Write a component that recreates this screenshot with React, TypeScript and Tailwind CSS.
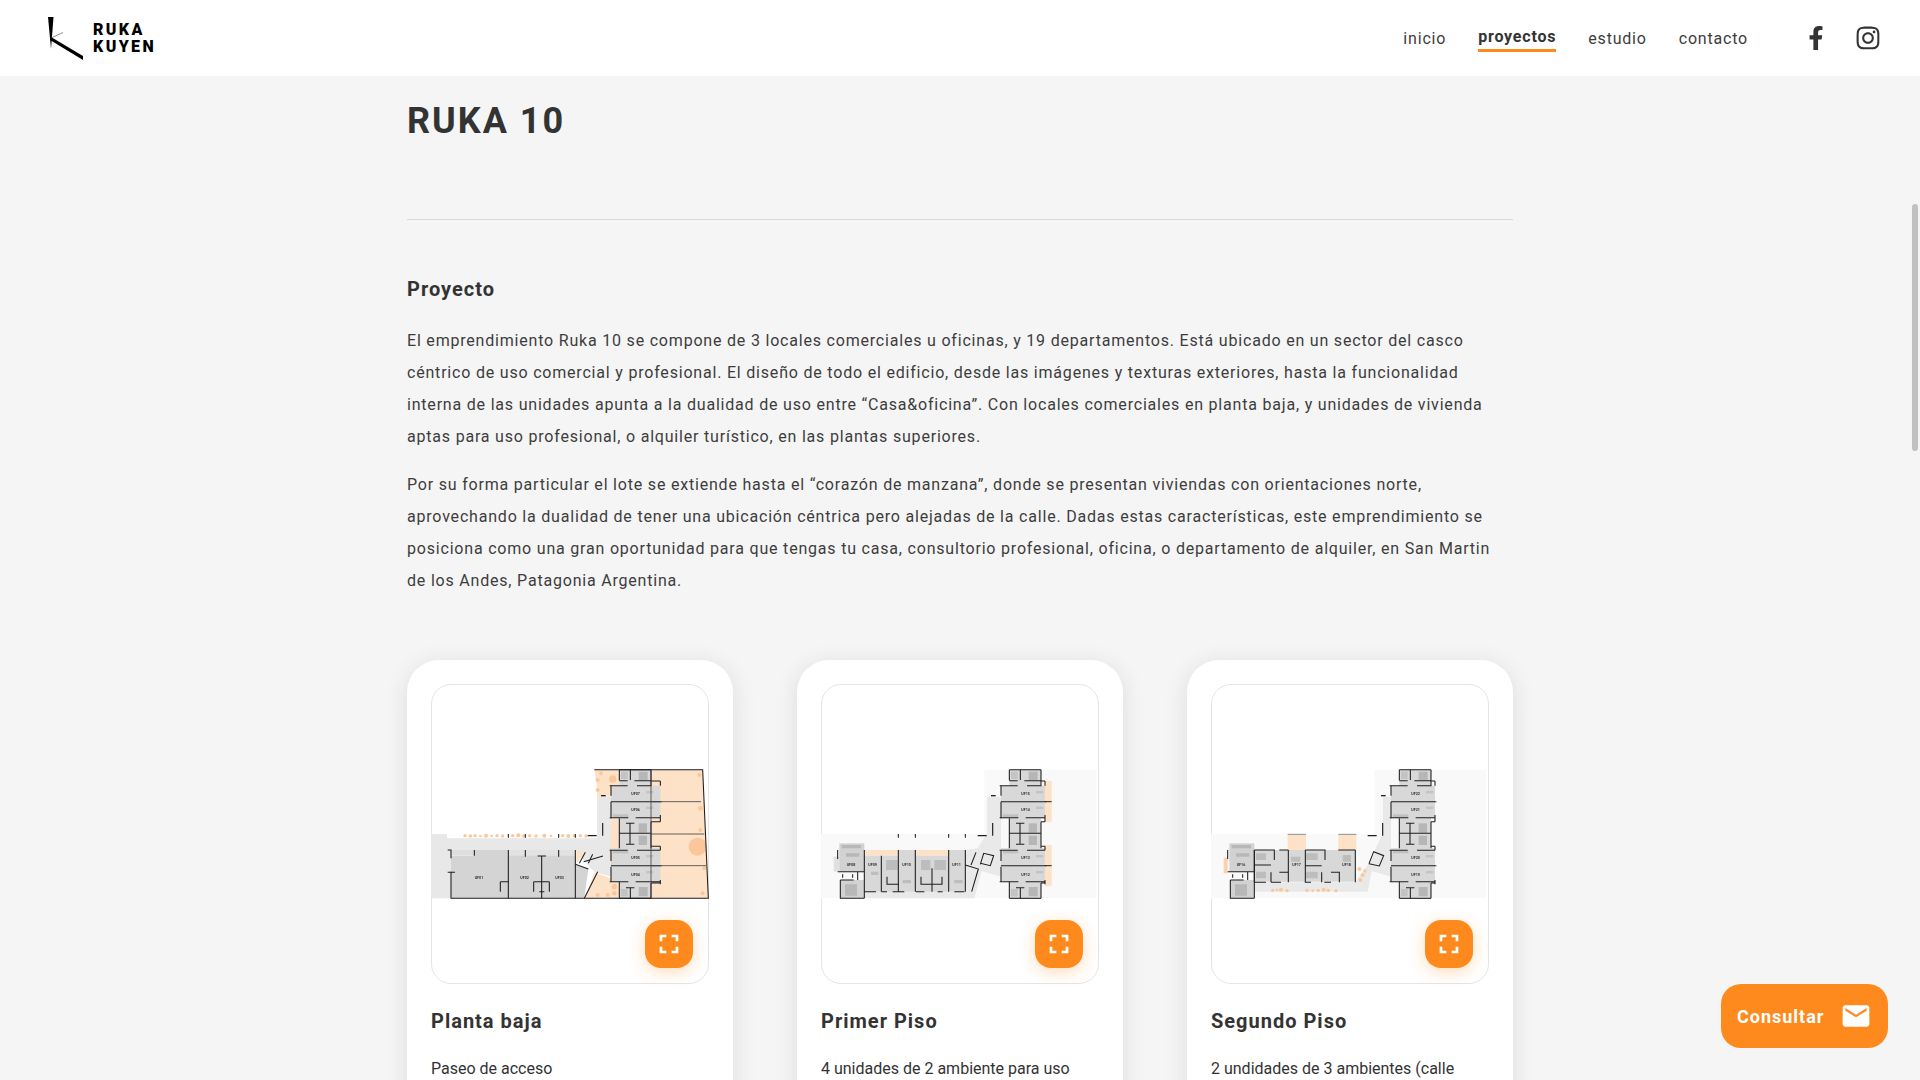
import React from 'react';
import { FaFacebookF, FaInstagram } from 'react-icons/fa';
import { MdEmail, MdFullscreen } from 'react-icons/md';

const WALL = '#1f1f1f';
const PEACH = '#fde2c8';
const DOT = '#fbc79a';

const Wall: React.FC<{ d: string; w?: number; color?: string }> = ({ d, w = 3.2, color = WALL }) => (
  <path d={d} fill="none" stroke={color} strokeWidth={w} />
);

const Label: React.FC<{ x: number; y: number; children: string }> = ({ x, y, children }) => (
  <text x={x} y={y} fontSize="11" fontWeight="700" textAnchor="middle" fill="#333" fontFamily="Roboto, sans-serif">
    {children}
  </text>
);

const Dots: React.FC<{ points: number[][] }> = ({ points }) => (
  <g fill={DOT}>
    {points.map(([x, y, r], i) => (
      <circle key={i} cx={x} cy={y} r={r} />
    ))}
  </g>
);

// East wing, the same on all three floors
const Tower: React.FC<{ right: number; labels: string[] }> = ({ right, labels }) => (
  <g>
    <path
      d={`M565 14H660V62H${right}V160H660V250H${right}V350H660V400H565V350H540V250H565V160H540V62H565Z`}
      fill="#d8d8d8"
    />
    <g fill="#b6b6b6">
      <rect x="623" y="20" width="27" height="26" />
      <rect x="623" y="175" width="25" height="28" />
      <rect x="623" y="212" width="25" height="28" />
      <rect x="623" y="366" width="27" height="28" />
      <rect x="570" y="20" width="20" height="22" opacity="0.6" />
      <rect x="570" y="372" width="20" height="22" opacity="0.6" />
      <rect x="546" y="148" width="46" height="10" opacity="0.7" />
      <rect x="546" y="256" width="46" height="9" opacity="0.7" />
      <rect x="645" y="78" width="22" height="7" opacity="0.6" />
      <rect x="645" y="125" width="22" height="7" opacity="0.6" />
      <rect x="645" y="270" width="22" height="7" opacity="0.6" />
      <rect x="645" y="318" width="22" height="7" opacity="0.6" />
    </g>
    <Wall d="M565 14H660M565 14V46M660 14V48M565 47H590M610 47H660" />
    <Wall d={`M536 62H590M618 62H660V48H${right}M${right} 48V62`} />
    <Wall d="M540 62V92M540 110V160" />
    <Wall d={`M540 110H${right + 4}M536 158H592M614 158H${right}M${right} 150V170M660 170H${right}`} />
    <Wall d="M565 160V250M660 170V250M565 205H660M585 175H610M585 238H610M597 175V238" />
    <Wall d={`M536 256H590M618 256H${right}M${right} 244V256M660 244H${right}`} />
    <Wall d="M540 256V288M540 305V350" />
    <Wall d={`M540 302H${right + 4}M536 350H592M614 350H${right}M${right} 345V358M660 354H${right}`} />
    <Wall d="M565 350V400M660 354V400M585 368H610M598 368V400M598 14V45" />
    <Wall d="M565 400H660" />
    <Label x={614} y={90}>{labels[0]}</Label>
    <Label x={614} y={138}>{labels[1]}</Label>
    <Label x={614} y={281}>{labels[2]}</Label>
    <Label x={614} y={332}>{labels[3]}</Label>
    <path d="M510 92H524" stroke={WALL} strokeWidth="4" />
    <path d="M470 212H497M515 174V212" stroke={WALL} strokeWidth="3.5" fill="none" />
  </g>
);

const PlantaBaja = () => (
  <>
    <path d="M0 207H48V220H498V95H540V335L490 320L470 300L433 255H60V400H0Z" fill="#e8e8e8" />
    <path d="M660 14H815L832 400H660Z" fill={PEACH} />
    <path d="M490 14H565V62H540V95H498V70Z" fill={PEACH} />
    <path d="M540 160H565V250H536V280H540V160Z" fill={DOT} opacity="0.55" />
    <path d="M490 322L540 340H565V400H462Z" fill={PEACH} />
    <path d="M436 258H462L436 298Z" fill={PEACH} />
    <Dots
      points={[
        [545, 42, 11], [500, 45, 6], [500, 75, 6], [510, 25, 6], [805, 30, 6], [808, 130, 7], [808, 195, 6],
        [800, 245, 27], [820, 310, 6], [815, 385, 6], [500, 390, 6], [530, 390, 6], [550, 365, 8], [550, 385, 7],
        [102, 212, 5], [118, 213, 5], [132, 212, 5], [148, 213, 4], [165, 212, 6], [182, 213, 4], [198, 212, 5],
        [215, 213, 5], [245, 212, 5], [262, 211, 6], [278, 213, 5], [296, 212, 5], [315, 213, 5], [340, 212, 6],
        [360, 213, 4], [395, 212, 5], [412, 213, 6], [430, 212, 5], [448, 212, 5], [465, 213, 5],
      ]}
    />
    <path d="M60 272H130V255H433V400H60Z" fill="#d4d4d4" />
    <path d="M60 255H130V272H60Z" fill="#dedede" />
    <path d="M232 255H433V272H232Z" fill="#e2e2e2" />
    <path d="M433 300L472 312L460 400H433Z" fill="#d4d4d4" />
    <Tower right={688} labels={['UF07', 'UF06', 'UF05', 'UF04']} />
    <Wall d="M490 14H815L832 400H60V320" />
    <Wall d="M660 110H810M660 207H820M660 302H825M660 14V400" w={2.5} color="#444" />
    <Wall d="M50 255H60V280M130 255V272M232 255V400M283 255V275M383 255V275M433 255V400M320 273H345M332 273V400" />
    <Wall d="M50 322H72M208 350H232M208 350V380M308 350H355M308 350V380M355 350V380M325 380H340" />
    <Wall d="M433 298L472 312M500 320L460 400M445 295L463 262M458 290L516 273M485 268L472 295" />
    <Wall d="M232 207V218M283 207V218M383 207V218M433 207V218" />
    <Label x={144} y={342}>UF01</Label>
    <Label x={281} y={342}>UF02</Label>
    <Label x={386} y={342}>UF03</Label>
  </>
);

const WestUnits: React.FC<{ labels: string[]; y: number }> = ({ labels, y }) => (
  <g>
    <path d="M55 235H130V320H55Z" fill="#d2d2d2" />
    <path d="M58 345H130V400H58Z" fill="#d2d2d2" />
    <path d="M62 240H120V250H62ZM75 265H115V275H75ZM72 358H108V392H72Z" fill="#b8b8b8" />
    <Wall d="M50 255V282M50 320H130M130 255V400M58 345V400H130M58 345H98M110 320V345M65 328V338M95 328V338" />
    <Label x={90} y={y}>{labels[0]}</Label>
  </g>
);

const PrimerPiso = () => (
  <>
    <path d="M490 14H826V400H0V207H490Z" fill="#f9f9f9" />
    <path d="M498 95H540V335L482 318L460 400H130V380H433V255L470 250L498 205Z" fill="#e9e9e9" />
    <path d="M672 48H692V172H672ZM672 240H692V364H672Z" fill={PEACH} />
    <rect x="133" y="255" width="99" height="17" fill={PEACH} />
    <rect x="285" y="255" width="98" height="17" fill={PEACH} />
    <path d="M38 275H55V320H38Z" fill="#e0e0e0" />
    <path d="M130 272H232V255H283V272H383V255H433V380H130Z" fill="#d8d8d8" />
    <path d="M195 285H230V315H195ZM300 285H328V315H300ZM340 285H375V315H340Z" fill="#bdbdbd" />
    <path d="M150 320H172V330H150ZM245 345H270V355H245ZM400 345H425V355H400Z" fill="#bdbdbd" />
    <WestUnits labels={['UF08']} y={304} />
    <Tower right={672} labels={['UF15', 'UF14', 'UF13', 'UF12']} />
    <path d="M672 110H692M672 302H692" stroke={WALL} strokeWidth="3" />
    <Wall d="M181 272V380M232 255V380M283 255V380M333 310V380M383 255V380M433 255V380" />
    <Wall d="M130 380H165M181 380H198M215 380H250M285 380H310M350 380H365M400 380H430" />
    <Wall d="M198 335V358H232M300 335V358H363V335" />
    <Wall d="M232 207V218M283 207V218M383 207V218M433 207V218" />
    <Wall d="M433 300L472 312L452 380M450 300L465 262M478 298L488 265L518 272L508 302L478 295" />
    <Label x={155} y={304}>UF09</Label>
    <Label x={257} y={304}>UF10</Label>
    <Label x={407} y={304}>UF11</Label>
  </>
);

const SegundoPiso = () => (
  <>
    <path d="M490 14H826V400H0V207H490Z" fill="#f9f9f9" />
    <path d="M516 95H540V335L482 318L470 380H130V352H433L470 300L516 205Z" fill="#e9e9e9" />
    <rect x="230" y="210" width="55" height="46" fill={PEACH} />
    <rect x="382" y="210" width="54" height="46" fill={PEACH} />
    <path d="M38 278H50V325H38Z" fill={DOT} opacity="0.8" />
    <path d="M130 255H433V350H130Z" fill="#d8d8d8" />
    <path d="M135 265H165V285H135ZM135 320H165V340H135ZM285 265H320V285H285ZM285 320H320V340H285ZM240 275H268V290H240ZM395 270H420V290H395Z" fill="#bdbdbd" />
    <WestUnits labels={['UF16']} y={304} />
    <Tower right={672} labels={['UF22', 'UF21', 'UF20', 'UF19']} />
    <Dots
      points={[
        [185, 376, 5], [198, 375, 4], [210, 374, 6], [228, 377, 5], [288, 376, 5], [305, 377, 4], [322, 376, 5],
        [338, 374, 6], [352, 376, 5], [375, 377, 5], [445, 312, 6], [462, 318, 5], [455, 330, 6], [448, 345, 6],
      ]}
    />
    <Wall d="M130 255H190V285M130 352H165M130 255V352M130 300H180M232 255V352M180 322V352M180 352H210M205 322H232V352" />
    <Wall d="M283 255V352H300M283 255H342V285M283 302H332M332 322V352M360 322H385V352M340 352H360M433 255V352M382 255H433M205 255H232" />
    <Wall d="M230 208H285M382 208H436" w={1.5} />
    <Wall d="M474 296L488 260L518 272L505 303L474 296" />
    <Label x={257} y={304}>UF17</Label>
    <Label x={407} y={304}>UF18</Label>
  </>
);

const floors = [
  { title: 'Planta baja', text: 'Paseo de acceso', plan: <PlantaBaja /> },
  { title: 'Primer Piso', text: '4 unidades de 2 ambiente para uso', plan: <PrimerPiso /> },
  { title: 'Segundo Piso', text: '2 undidades de 3 ambientes (calle', plan: <SegundoPiso /> },
];

const Logo = () => (
  <div className="flex items-center">
    <svg width="36" height="46" viewBox="0 0 36 46" className="ml-[47px] mt-[2px]">
      <path d="M1 1H6.5L4 33Z" fill="#000" />
      <path d="M4 21L36 40V44L3 24Z" fill="#000" />
      <path d="M4 22L16 16.5" stroke="#444" strokeWidth="0.6" />
    </svg>
    <div className="ml-[10px] -mt-[1px] text-[16px] leading-[17px] font-black tracking-[2.4px] text-black">
      RUKA
      <br />
      KUYEN
    </div>
  </div>
);

const NavLink: React.FC<{ label: string; active?: boolean }> = ({ label, active }) => (
  <a
    className={
      active
        ? 'block font-bold text-[#333] border-b-[3px] border-[#fe8a1e] leading-[24px]'
        : 'block text-[#3d3d3d] leading-[24px]'
    }
  >
    {label}
  </a>
);

export default function App() {
  return (
    <div className="relative h-screen overflow-hidden bg-[#f5f5f5] font-['Roboto',sans-serif] text-[#333]">
      {/* Header */}
      <header className="flex h-[76px] items-center justify-between bg-white">
        <Logo />
        <div className="flex items-center">
          <nav className="mt-[1px] flex items-center gap-8 text-[16px] tracking-[0.8px]">
            <NavLink label="inicio" />
            <NavLink label="proyectos" active />
            <NavLink label="estudio" />
            <NavLink label="contacto" />
          </nav>
          <FaFacebookF className="ml-[56px] h-[24px] w-[24px] text-[#333]" />
          <FaInstagram className="ml-[27px] mr-[39px] h-[26px] w-[26px] text-[#333]" />
        </div>
      </header>

      <main className="mx-auto w-[1106px]">
        <h1 className="mt-[21px] text-[36px] font-bold leading-[48px] tracking-[2px]">RUKA 10</h1>
        <div className="mt-[74px] h-px bg-[#d8d8d8]" />

        <h2 className="mt-[55px] text-[20px] font-bold leading-[28px] tracking-[1px]">Proyecto</h2>
        <p className="mt-[22px] pr-[5px] text-[16px] leading-[32px] tracking-[0.8px] text-[#3d3d3d]">
          El emprendimiento Ruka 10 se compone de 3 locales comerciales u oficinas, y 19 departamentos. Está ubicado en un
          sector del casco céntrico de uso comercial y profesional. El diseño de todo el edificio, desde las imágenes y
          texturas exteriores, hasta la funcionalidad interna de las unidades apunta a la dualidad de uso entre
          “Casa&oficina”. Con locales comerciales en planta baja, y unidades de vivienda aptas para uso profesional, o
          alquiler turístico, en las plantas superiores.
        </p>
        <p className="mt-[16px] pr-[5px] text-[16px] leading-[32px] tracking-[0.8px] text-[#3d3d3d]">
          Por su forma particular el lote se extiende hasta el “corazón de manzana”, donde se presentan viviendas con
          orientaciones norte, aprovechando la dualidad de tener una ubicación céntrica pero alejadas de la calle. Dadas
          estas características, este emprendimiento se posiciona como una gran oportunidad para que tengas tu casa,
          consultorio profesional, oficina, o departamento de alquiler, en San Martin de los Andes, Patagonia Argentina.
        </p>

        {/* Floor cards */}
        <div className="mt-[63px] grid grid-cols-3 gap-[64px]">
          {floors.map((floor) => (
            <div key={floor.title} className="h-[500px] rounded-[32px] bg-white p-6 shadow-[0_4px_24px_rgba(0,0,0,0.1)]">
              <div className="relative flex h-[300px] items-center justify-center rounded-[20px] border border-[#e5e5e5] bg-white">
                <svg viewBox="0 0 834 420" className="mt-[1px] h-[140px] w-[280px] shrink-0 blur-[0.35px]">
                  {floor.plan}
                </svg>
                <button className="absolute right-[15px] bottom-[15px] flex h-12 w-12 items-center justify-center rounded-2xl bg-[#fe8a1e] shadow-[0_4px_16px_rgba(254,138,30,0.3)]">
                  <MdFullscreen className="h-8 w-8 text-white" />
                </button>
              </div>
              <h3 className="mt-[23px] text-[20px] font-bold leading-[28px] tracking-[1px]">{floor.title}</h3>
              <p className="mt-[20px] text-[16px] leading-[28px]">{floor.text}</p>
            </div>
          ))}
        </div>
      </main>

      {/* Floating contact button */}
      <button className="absolute right-8 bottom-8 flex h-16 w-[167px] items-center rounded-[20px] bg-[#fe8a1e] pl-4 text-[18px] font-bold tracking-[1px] text-white">
        Consultar
        <MdEmail className="ml-[16px] h-8 w-8" />
      </button>

      {/* Overlay scrollbar */}
      <div className="absolute top-[204px] right-[2px] h-[247px] w-[6px] rounded-full bg-[#c1c1c1]" />
    </div>
  );
}
